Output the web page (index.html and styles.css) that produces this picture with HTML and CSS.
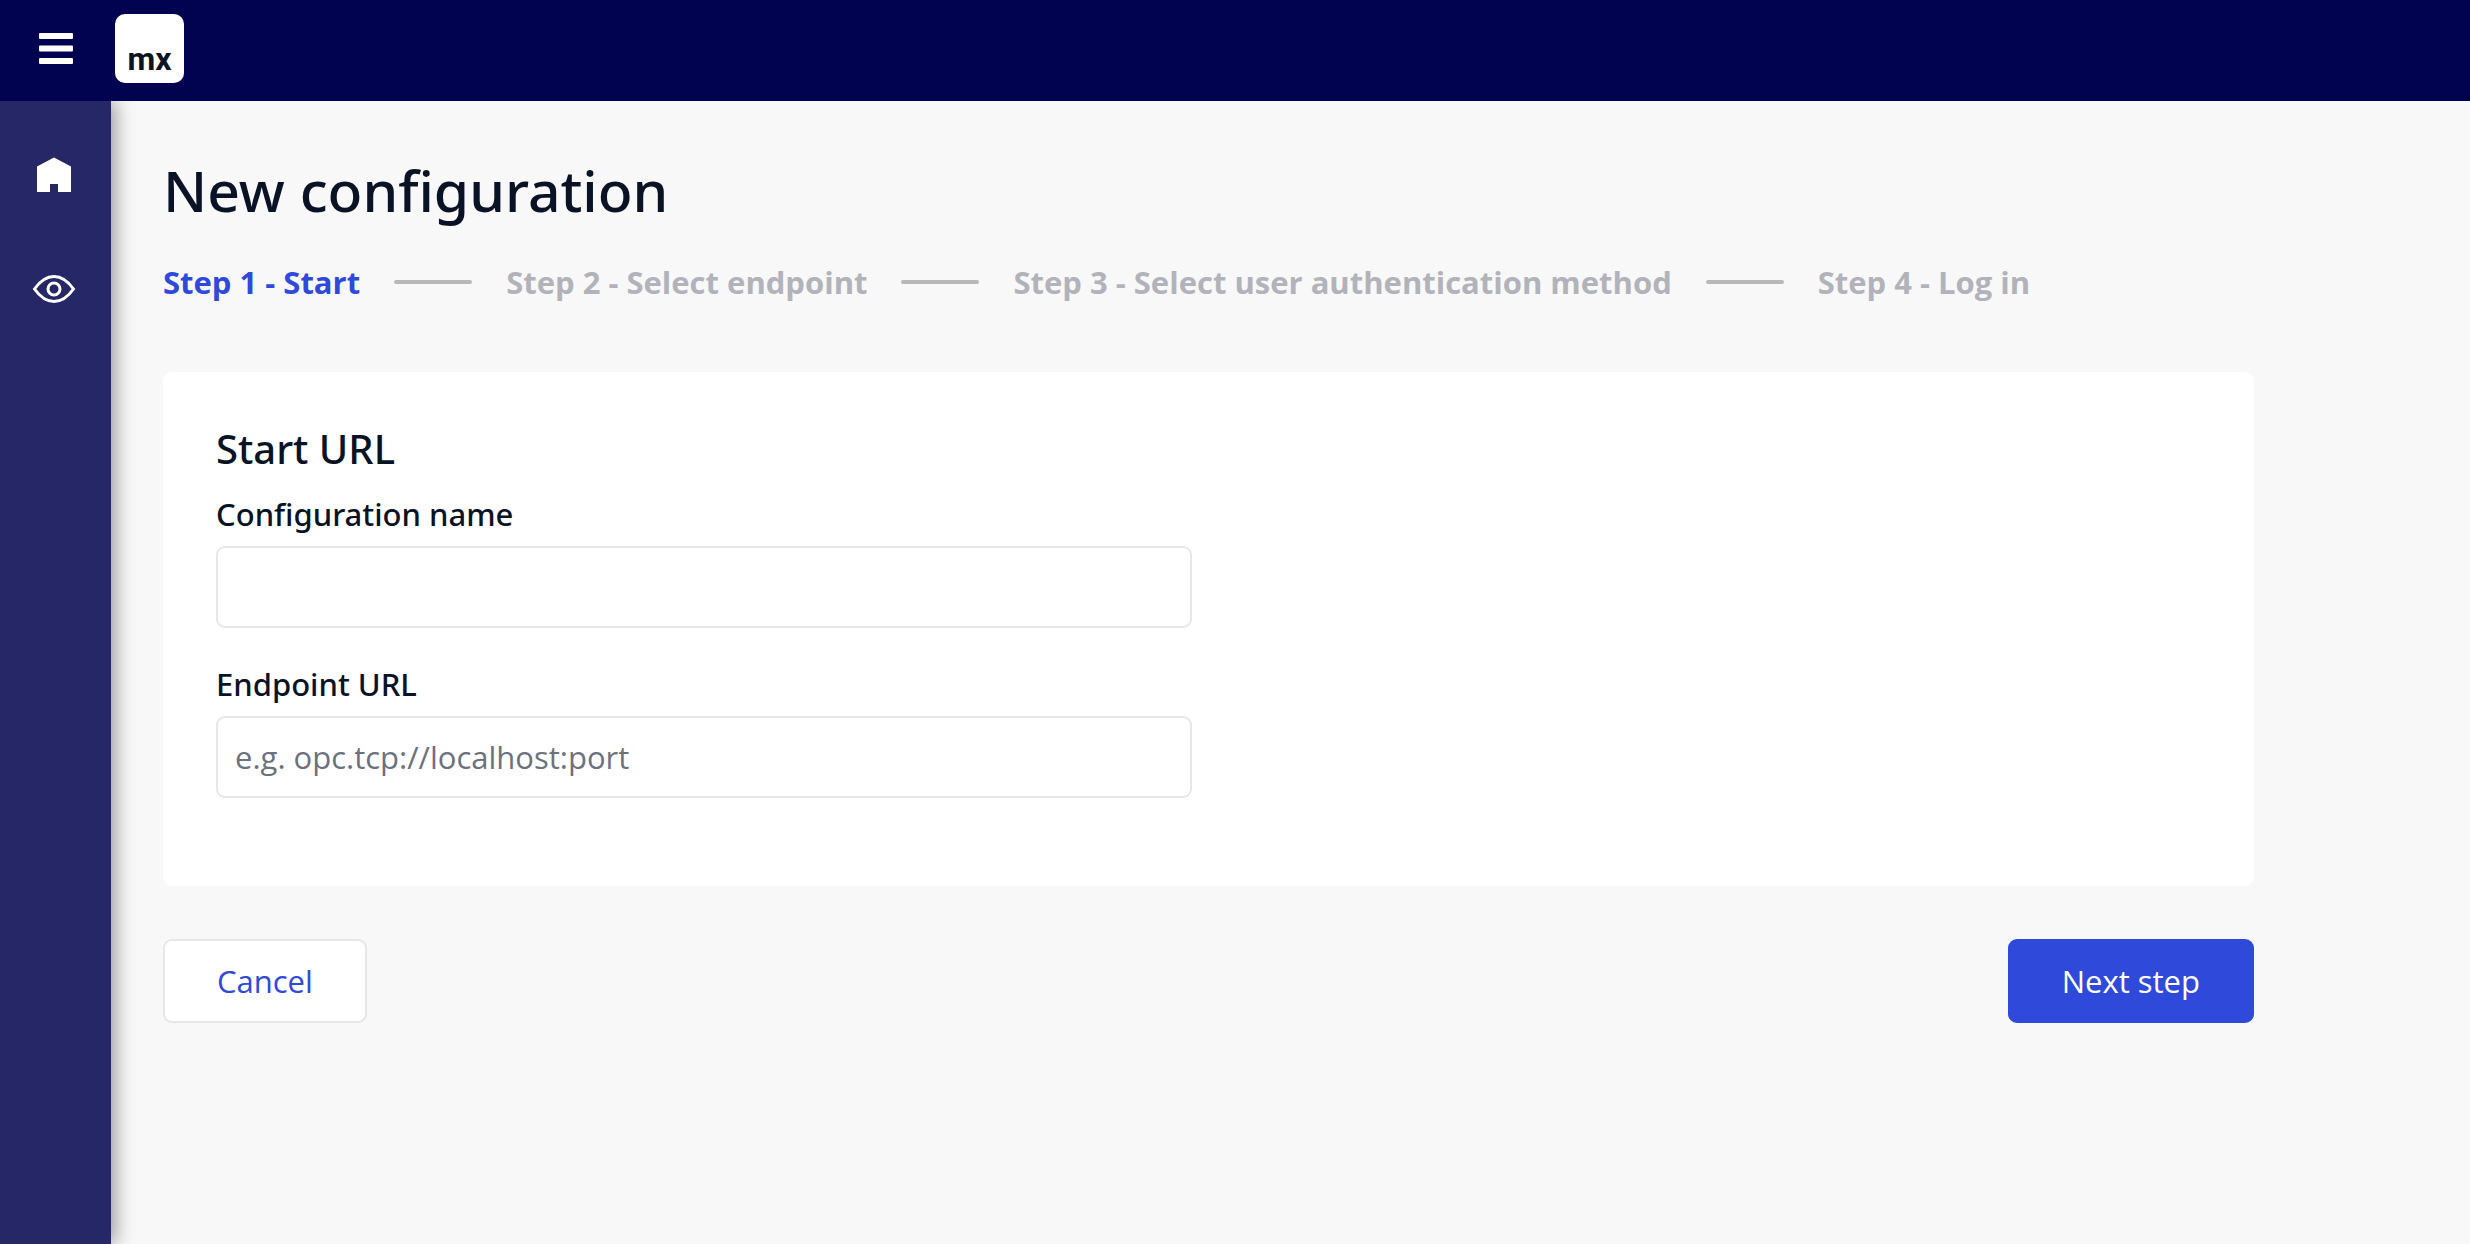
FILE: index.html
```html
<!DOCTYPE html>
<html lang="en">
<head>
<meta charset="utf-8">
<meta name="viewport" content="width=device-width, initial-scale=1">
<title>New configuration</title>
<link rel="stylesheet" href="styles.css">
</head>
<body>
<header class="topbar">
  <button class="menu-toggle" type="button" aria-label="Toggle menu">
    <svg width="34" height="32" viewBox="0 0 34 32" fill="currentColor" aria-hidden="true">
      <rect y="0" width="34" height="6" rx="1"/>
      <rect y="12.5" width="34" height="6" rx="1"/>
      <rect y="25" width="34" height="6" rx="1"/>
    </svg>
  </button>
  <a class="logo" href="#">mx</a>
</header>
<div class="layout">
  <nav class="sidebar" aria-label="Main">
    <a class="nav-link" href="#" aria-label="Home">
      <svg width="44" height="44" viewBox="0 0 44 44" fill="currentColor" aria-hidden="true">
        <path d="M22 4.500 39 13.500V39H26V31H18V39H5V13.500Z"/>
      </svg>
    </a>
    <a class="nav-link" href="#" aria-label="Overview">
      <svg width="44" height="44" viewBox="0 0 44 44" fill="none" stroke="currentColor" stroke-width="3" aria-hidden="true">
        <path d="M2.500 22C8.500 13.500 15 9.500 22 9.500S35.500 13.500 41.500 22C35.500 30.500 29 34.500 22 34.500S8.500 30.500 2.500 22Z"/>
        <circle cx="22" cy="22" r="6"/>
      </svg>
    </a>
  </nav>
  <main class="content">
    <h1 class="page-title">New configuration</h1>
    <ol class="steps">
      <li class="step step-active" aria-current="step">Step 1 - Start</li>
      <li class="step">Step 2 - Select endpoint</li>
      <li class="step">Step 3 - Select user authentication method</li>
      <li class="step">Step 4 - Log in</li>
    </ol>
    <form class="wizard">
      <section class="card">
        <h2 class="card-title">Start URL</h2>
        <div class="field">
          <label class="field-label" for="config-name">Configuration name</label>
          <input class="field-input" id="config-name" type="text">
        </div>
        <div class="field">
          <label class="field-label" for="endpoint-url">Endpoint URL</label>
          <input class="field-input" id="endpoint-url" type="text" placeholder="e.g. opc.tcp://localhost:port">
        </div>
      </section>
      <div class="actions">
        <button class="btn btn-default" type="button">Cancel</button>
        <button class="btn btn-primary" type="submit">Next step</button>
      </div>
    </form>
  </main>
</div>
</body>
</html>
```
FILE: styles.css
```css
*, *::before, *::after { box-sizing: border-box; }

body {
  margin: 0;
  min-height: 100vh;
  display: flex;
  flex-direction: column;
  background: #f8f8f8;
  color: #0a1325;
  font: 31px/44px "Open Sans", sans-serif;
}

h1, h2, ol { margin: 0; padding: 0; }

/* Medium-weight text */
.page-title, .card-title, .field-label {
  font-family: "Noto Sans", "Open Sans", sans-serif;
  font-weight: 500;
}

.topbar {
  display: flex;
  align-items: center;
  gap: 42px;
  height: 101px;
  padding: 0 39px 4px;
  background: #020350;
}

.menu-toggle {
  display: flex;
  padding: 0;
  border: 0;
  background: none;
  color: #fff;
}

.logo {
  display: flex;
  align-items: flex-end;
  justify-content: center;
  width: 69px;
  height: 69px;
  padding-bottom: 4px;
  border-radius: 10px;
  background: #fff;
  color: #0a1325;
  font: 700 32px/40px Roboto, sans-serif;
  text-decoration: none;
}

.layout { flex: 1; display: flex; }

.sidebar {
  flex: none;
  display: flex;
  flex-direction: column;
  gap: 70px;
  width: 111px;
  padding: 52px 32px;
  background: #262766;
  box-shadow: 4px 0 18px rgba(0, 0, 0, 0.4);
  clip-path: inset(0 -40px 0 0);
}

.nav-link { display: flex; color: #fff; }

.content { flex: 1; min-width: 0; padding: 53px 52px; }

.page-title { font-size: 57px; line-height: 72px; }

.steps {
  display: flex;
  align-items: center;
  margin: 34px 0 68px;
  list-style: none;
  font-weight: 700;
  color: #b2b3ba;
}

.step { display: flex; align-items: center; }

.step:not(:last-child)::after {
  content: "";
  width: 78px;
  height: 4px;
  margin: 0 34px;
  border-radius: 2px;
  background: #b8b8b8;
}

.step-active { color: #2f49da; }

.wizard { max-width: 2091px; }

.card {
  display: flex;
  flex-direction: column;
  padding: 53px 53px 88px;
  border-radius: 9px;
  background: #fff;
}

.card-title { margin-bottom: 19px; font-size: 40px; line-height: 48px; }

.field {
  display: flex;
  flex-direction: column;
  gap: 10px;
  width: calc(50% - 17px);
}

.field + .field { margin-top: 34px; }

.field-input {
  height: 82px;
  padding: 0 17px;
  border: 2px solid #e7e7e9;
  border-radius: 9px;
  background: #fff;
  color: inherit;
  font: inherit;
}

.field-input::placeholder { color: #6c717e; opacity: 1; }

.actions {
  display: flex;
  justify-content: space-between;
  margin-top: 53px;
}

.btn {
  height: 84px;
  padding: 0 52px;
  border: 2px solid #e7e7e9;
  border-radius: 9px;
  background: #fff;
  color: #2f49da;
  font: inherit;
}

.btn-primary { border-color: #2f49da; background: #2f49da; color: #fff; }
```
